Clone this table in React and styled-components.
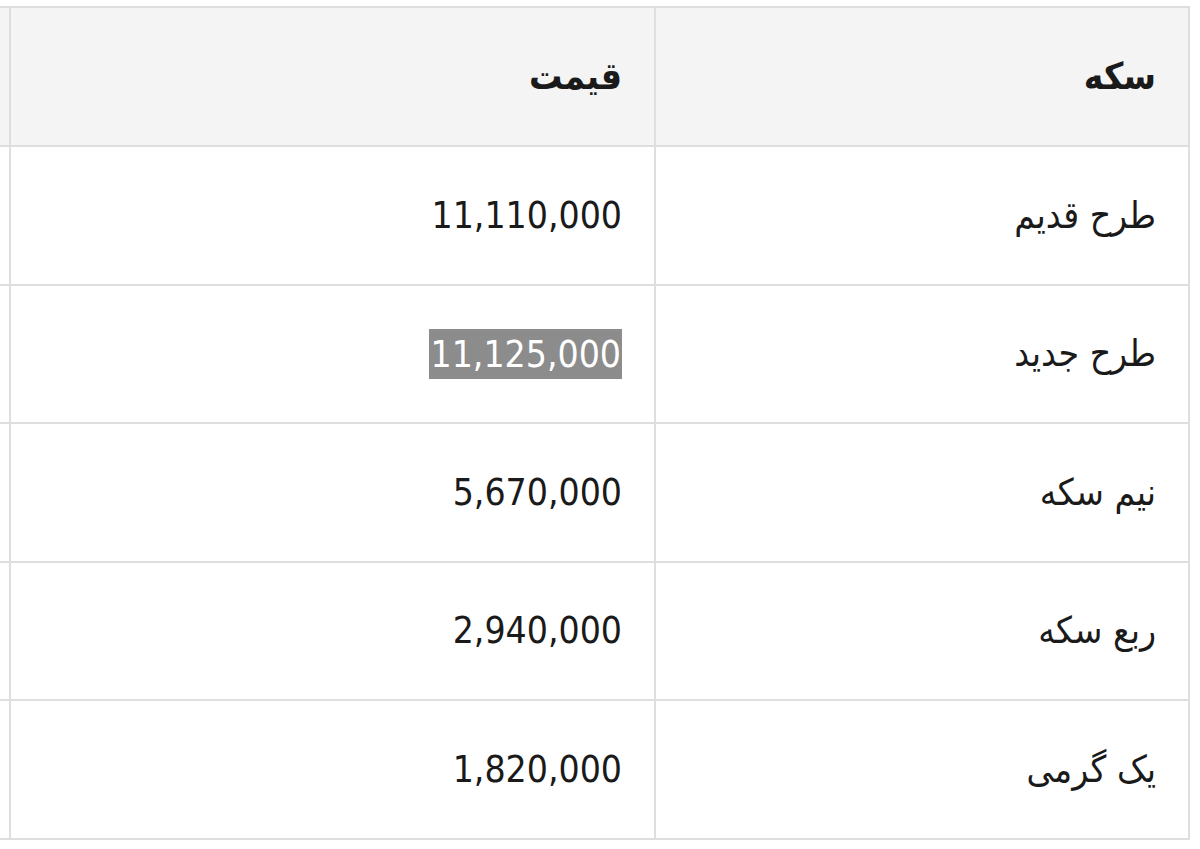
import React from "react";
import styled, { createGlobalStyle } from "styled-components";

const GlobalStyle = createGlobalStyle`
  html, body {
    margin: 0;
    padding: 0;
    background: #ffffff;
  }
  body {
    font-family: "DejaVu Sans Condensed", "DejaVu Sans", Tahoma, sans-serif;
    color: #1a1a1a;
  }
`;

const Page = styled.div`
  padding-top: 6px;
  width: 1200px;
  height: 849px;
  overflow: hidden;
`;

const Table = styled.table`
  direction: rtl;
  width: 1189px;
  table-layout: fixed;
  border-collapse: collapse;
  font-size: 37px;
`;

// the far left column is cut off by the screenshot edge, so it has no left border
const HeadCell = styled.th`
  height: 137px;
  padding: 0 32px;
  background: #f4f4f4;
  border: 2px solid #dedede;
  text-align: right;
  font-weight: bold;
  vertical-align: middle;
  &:last-child {
    padding: 0;
    border-left: none;
  }
`;

const Cell = styled.td`
  height: 136.5px;
  padding: 0 32px;
  border: 2px solid #dedede;
  text-align: right;
  vertical-align: middle;
  white-space: nowrap;
  &:last-child {
    padding: 0;
    border-left: none;
  }
`;

const Selected = styled.span`
  display: inline-block;
  background: #8c8c8c;
  color: #ffffff;
  padding: 4px 1px 3px;
  margin-left: -1px;
`;

const coins = [
  { name: "طرح قدیم", price: "11,110,000" },
  { name: "طرح جدید", price: "11,125,000", selected: true },
  { name: "نیم سکه", price: "5,670,000" },
  { name: "ربع سکه", price: "2,940,000" },
  { name: "یک گرمی", price: "1,820,000" },
];

export default function App() {
  return (
    <Page>
      <GlobalStyle />
      <Table>
        <colgroup>
          <col style={{ width: 534 }} />
          <col style={{ width: 645 }} />
          <col style={{ width: 10 }} />
        </colgroup>
        <thead>
          <tr>
            <HeadCell>سکه</HeadCell>
            <HeadCell>قیمت</HeadCell>
            <HeadCell />
          </tr>
        </thead>
        <tbody>
          {coins.map((coin) => (
            <tr key={coin.name}>
              <Cell>{coin.name}</Cell>
              <Cell>
                {coin.selected ? <Selected>{coin.price}</Selected> : coin.price}
              </Cell>
              <Cell />
            </tr>
          ))}
        </tbody>
      </Table>
    </Page>
  );
}
